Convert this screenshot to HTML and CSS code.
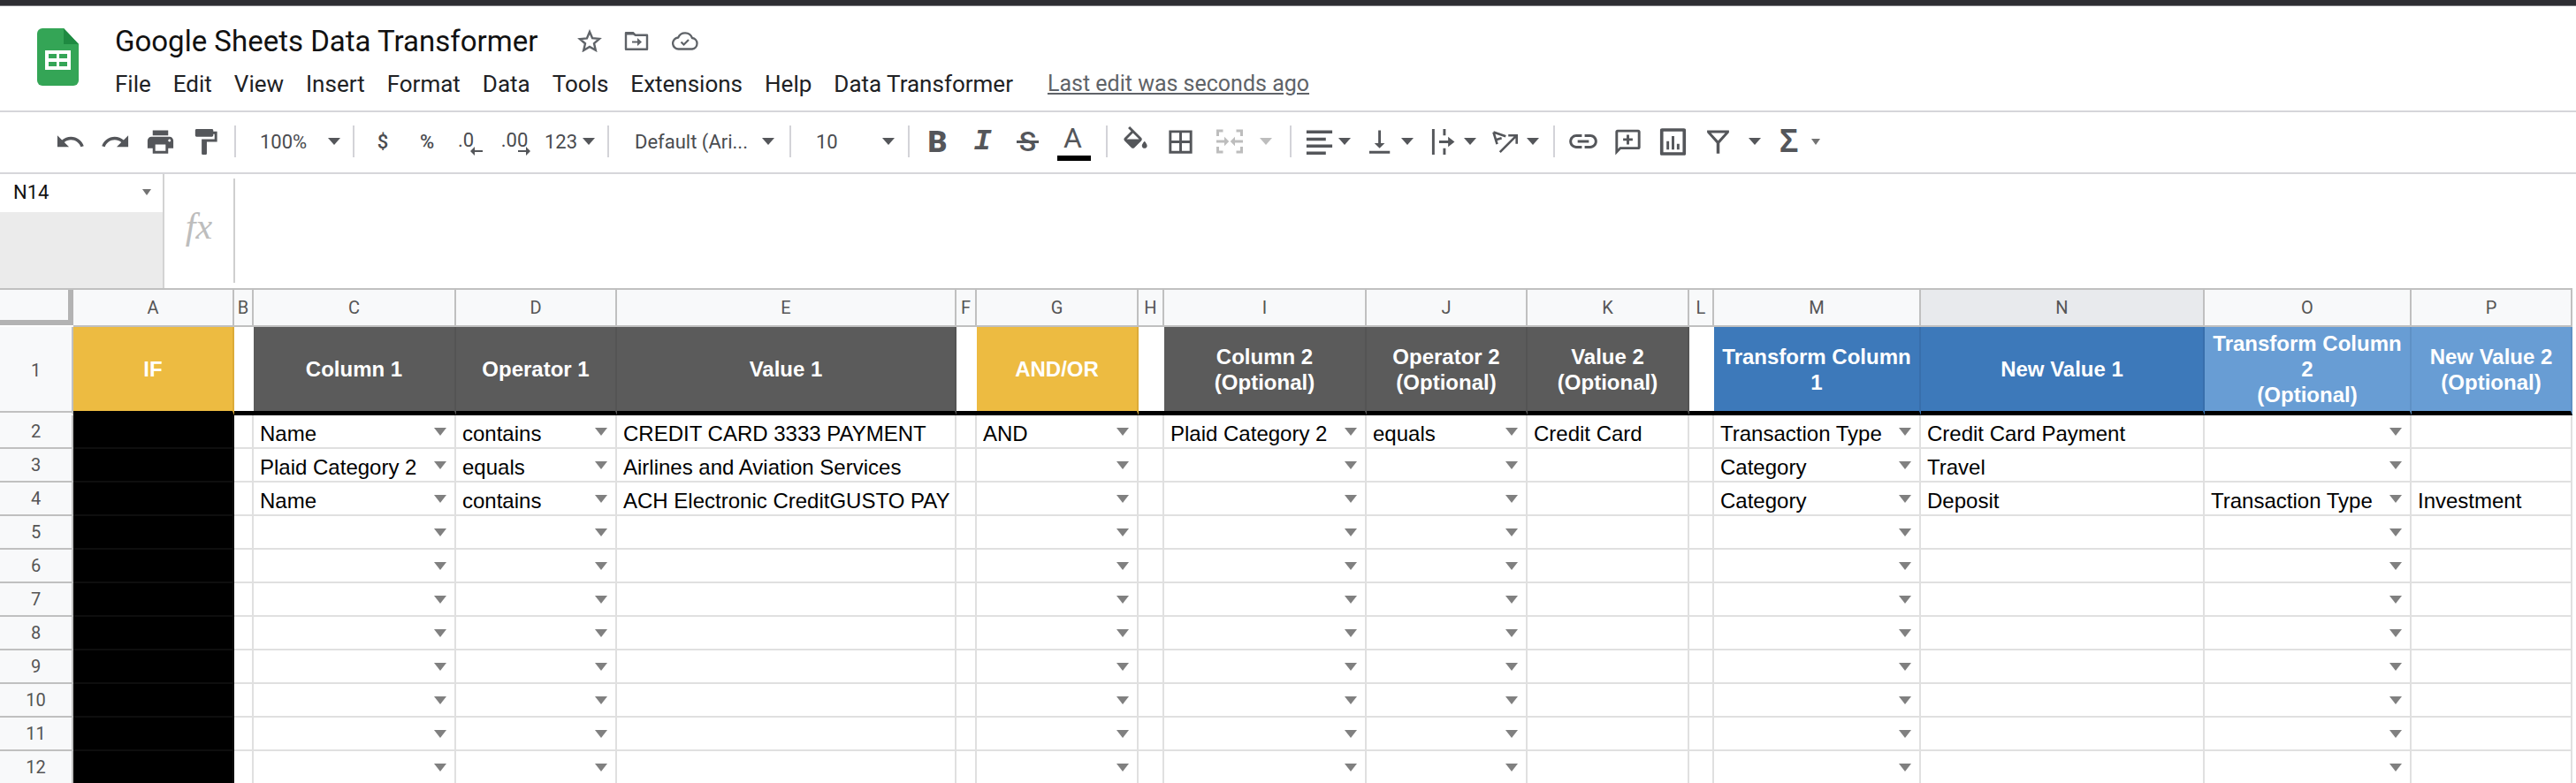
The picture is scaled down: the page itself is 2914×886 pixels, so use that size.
FILE: index.html
```html
<!DOCTYPE html>
<html>
<head>
    <title>Google Sheets Data Transformer</title>
    <link rel="stylesheet" href="styles.css">
</head>
<body>
    <div class="topbar"></div>
    <header class="docbar">
        <svg class="logo" viewBox="0 0 47 65">
            <path fill="#34a556" d="M6 0H30L47 18V59a6 6 0 0 1-6 6H6a6 6 0 0 1-6-6V6a6 6 0 0 1 6-6z"/>
            <path fill="#1e8a41" d="M30 0L47 18H30z"/>
            <path fill="#fff" d="M9 25H38V47H9z"/>
            <path fill="#34a556" d="M13 29H22V34H13zM25 29H34V34H25zM13 38H22V43H13zM25 38H34V43H25z"/>
        </svg>
        <div class="docinfo">
            <div class="titlerow">
                <span class="title">Google Sheets Data Transformer</span>
                <svg class="ticon star" viewBox="0 0 28 26"><path fill="none" stroke="#5f6368" stroke-width="2.4" d="M14 3l3.1 7.2 7.9.7-6 5.2 1.8 7.7L14 20l-6.800 4 1.800-7.700-6-5.200 7.900-.700z"/></svg>
                <svg class="ticon folder" viewBox="0 0 28 24"><path fill="none" stroke="#5f6368" stroke-width="2.4" d="M2 3.200h8l2.500 2.500H26v16H2z" stroke-linejoin="round"/><path fill="#5f6368" d="M2 2h8l3 3.500H2zM9 12.500h6V9l5 4.500-5 4.500v-3.500H9z"/></svg>
                <svg class="ticon cloud" viewBox="0 0 30 22"><path fill="none" stroke="#5f6368" stroke-width="2.300" d="M8 20.500a6.500 6.500 0 0 1-.8-13A8.500 8.500 0 0 1 23 8a6.300 6.300 0 0 1 0 12.500z"/><path fill="none" stroke="#5f6368" stroke-width="2.200" d="M10.500 12.500l3 3 5.500-5.500"/></svg>
            </div>
            <nav class="menu">
                <span>File</span>
                <span>Edit</span>
                <span>View</span>
                <span>Insert</span>
                <span>Format</span>
                <span>Data</span>
                <span>Tools</span>
                <span>Extensions</span>
                <span>Help</span>
                <span>Data Transformer</span>
                <span class="lastedit">Last edit was seconds ago</span>
            </nav>
        </div>
    </header>

    <div class="toolbar">
        <div class="group g-history">
            <div class="t"><svg class="ic" viewBox="0 0 24 24"><path d="M12.500 8c-2.650 0-5.050.99-6.900 2.600L2 7v9h9l-3.620-3.620c1.390-1.160 3.160-1.880 5.120-1.880 3.540 0 6.550 2.310 7.600 5.500l2.370-.78C21.080 11.030 17.150 8 12.500 8z"/></svg></div>
            <div class="t"><svg class="ic" viewBox="0 0 24 24"><path d="M18.400 10.600C16.550 8.990 14.150 8 11.500 8c-4.650 0-8.580 3.030-9.960 7.220L3.900 16c1.050-3.190 4.050-5.500 7.600-5.500 1.950 0 3.730.72 5.120 1.880L13 16h9V7l-3.600 3.600z"/></svg></div>
            <div class="t"><svg class="ic" viewBox="0 0 24 24"><path d="M19 8H5c-1.660 0-3 1.340-3 3v6h4v4h12v-4h4v-6c0-1.660-1.340-3-3-3zm-3 11H8v-5h8v5zm3-7c-.55 0-1-.45-1-1s.45-1 1-1 1 .45 1 1-.45 1-1 1zm-1-9H6v4h12V3z"/></svg></div>
            <div class="t"><svg class="ic" viewBox="0 0 24 24"><path d="M18 4V3c0-.55-.45-1-1-1H5c-.55 0-1 .45-1 1v4c0 .55.45 1 1 1h12c.55 0 1-.45 1-1V6h1v4H9v11c0 .55.45 1 1 1h2c.55 0 1-.45 1-1v-9h8V4h-3z"/></svg></div>
        </div>
        <div class="group combo g-zoom"><span>100%</span><i class="tri"></i></div>
        <div class="group g-number">
            <div class="t txt w50">$</div>
            <div class="t txt w50">%</div>
            <div class="t txt w44 dec dec-less">.0<svg class="decarrow" viewBox="0 0 14 10"><path d="M5 0v4h9v2H5v4L0 5z"/></svg></div>
            <div class="t txt w60 dec dec-more">.00<svg class="decarrow" viewBox="0 0 14 10"><path d="M9 0v4H0v2h9v4l5-5z"/></svg></div>
            <div class="t txt w60 more">123<i class="tri"></i></div>
        </div>
        <div class="group combo g-font"><span>Default (Ari...</span><i class="tri"></i></div>
        <div class="group combo g-size"><span>10</span><i class="tri"></i></div>
        <div class="group g-format">
            <div class="t letter bold">B</div>
            <div class="t letter ital">I</div>
            <div class="t letter strike">S</div>
            <div class="t letter color">A</div>
        </div>
        <div class="group g-cell">
            <div class="t"><svg class="ic" viewBox="0 0 24 24"><path d="M16.560 8.940L7.620 0 6.210 1.410l2.380 2.380-5.150 5.150c-.59.59-.59 1.540 0 2.120l5.500 5.500c.29.29.68.44 1.060.44s.77-.15 1.060-.44l5.500-5.500c.59-.58.59-1.530 0-2.120zM5.210 10L10 5.210 14.790 10H5.210zM19 11.500s-2 2.170-2 3.500c0 1.100.9 2 2 2s2-.9 2-2c0-1.330-2-3.500-2-3.500z"/></svg></div>
            <div class="t"><svg class="ic" viewBox="0 0 24 24"><path d="M3 3v18h18V3H3zm8 16H5v-6h6v6zm0-8H5V5h6v6zm8 8h-6v-6h6v6zm0-8h-6V5h6v6z"/></svg></div>
            <div class="t w60"><svg class="ic off" viewBox="0 0 24 24"><path d="M2 3h5v2H4v3H2zM17 3h5v5h-2V5h-3zM2 16h2v3h3v2H2zM20 16h2v5h-5v-2h3zM2 11h6V8.500l3.500 3.500L8 15.500V13H2zM22 11h-6V8.500L12.500 12l3.500 3.500V13h6z"/></svg></div>
            <i class="tri off"></i>
        </div>
        <div class="group g-align">
            <div class="t dd"><svg class="ic" viewBox="0 0 24 24"><path d="M2 3h20v2.500H2zM2 8.700h15v2.500H2zM2 14h20v2.500H2zM2 19.500h15V22H2z"/></svg><i class="tri"></i></div>
            <div class="t dd"><svg class="ic" viewBox="2 0 24 24"><path d="M16 13h-3V3h-2v10H8l4 4 4-4zM4 19v2h16v-2H4z"/></svg><i class="tri"></i></div>
            <div class="t dd"><svg class="ic" viewBox="0 0 24 24"><path d="M2 2h2v20H2zM10.600 2h2v5h-2zM10.600 17h2v5h-2zM7.500 11h7V8l5 4-5 4v-3h-7z"/></svg><i class="tri"></i></div>
            <div class="t dd"><svg class="ic" viewBox="4 0 24 24"><path fill="none" stroke="#54565a" stroke-width="1.800" d="M5 4.500l9.500 3.200M5 4.500l2.800 9.300M6.300 10.700l5-1.600M10 20L22.500 7.500M16.500 7h6.500v6.500"/></svg><i class="tri"></i></div>
        </div>
        <div class="group g-insert">
            <div class="t"><svg class="ic link" viewBox="0 0 24 24"><path d="M3.900 12c0-1.710 1.390-3.100 3.100-3.100h4V7H7c-2.760 0-5 2.240-5 5s2.240 5 5 5h4v-1.900H7c-1.710 0-3.100-1.390-3.100-3.100zM8 13h8v-2H8v2zm9-6h-4v1.900h4c1.710 0 3.100 1.390 3.100 3.100s-1.390 3.100-3.100 3.100h-4V17h4c2.760 0 5-2.240 5-5s-2.240-5-5-5z"/></svg></div>
            <div class="t"><svg class="ic" viewBox="0 0 24 24"><path d="M4 2.500h16c1 0 1.700.7 1.700 1.700v12c0 1-.7 1.700-1.700 1.700H6.500l-4.200 4.300V4.200c0-1 .7-1.700 1.700-1.700zm.3 2v13l1.400-1.500h14V4.500zM11 6.500h2V9.200h2.700v2H13V14h-2v-2.800H8.300v-2H11z"/></svg></div>
            <div class="t"><svg class="ic" viewBox="0 0 24 24"><path d="M3.500 1.500h17c1 0 1.500.6 1.500 1.500v18c0 1-.5 1.500-1.500 1.500h-17C2.500 22.500 2 22 2 21V3c0-.9.500-1.500 1.500-1.500zM4.500 4v16h15V4zM7 11.500h2V18H7zM11 7.500h2V18h-2zM15 13.500h2V18h-2z"/></svg></div>
            <div class="t filter"><svg class="ic" viewBox="0 0 24 24"><path d="M3.500 3h17v1.800L13.200 13v8h-2.400v-8L3.500 4.800zm3 2.200L12 11.200l5.500-6z"/></svg></div>
            <i class="tri filter-tri"></i>
            <div class="t letter sigma">Σ</div>
            <i class="tri small"></i>
        </div>
    </div>

    <div class="formulabar">
        <div class="namebox">
            <div class="namecell"><span>N14</span><i class="tri small"></i></div>
        </div>
        <div class="fx">fx</div>
        <div class="input"></div>
    </div>

    <div class="sheet">
        <div class="corner"></div>
        <div class="ch">A</div><div class="ch">B</div><div class="ch">C</div><div class="ch">D</div><div class="ch">E</div><div class="ch">F</div><div class="ch">G</div><div class="ch">H</div><div class="ch">I</div><div class="ch">J</div><div class="ch">K</div><div class="ch">L</div><div class="ch">M</div><div class="ch active">N</div><div class="ch">O</div><div class="ch">P</div>

        <div class="rh first">1</div>
        <div class="hd yellow">IF</div>
        <div class="hd"></div>
        <div class="hd gray">Column 1</div>
        <div class="hd gray">Operator 1</div>
        <div class="hd gray">Value 1</div>
        <div class="hd"></div>
        <div class="hd yellow">AND/OR</div>
        <div class="hd"></div>
        <div class="hd gray">Column 2<br>(Optional)</div>
        <div class="hd gray">Operator 2<br>(Optional)</div>
        <div class="hd gray">Value 2<br>(Optional)</div>
        <div class="hd"></div>
        <div class="hd blue">Transform Column 1</div>
        <div class="hd blue">New Value 1</div>
        <div class="hd lightblue">Transform Column 2<br>(Optional)</div>
        <div class="hd lightblue">New Value 2<br>(Optional)</div>

        <div class="rh">2</div><div class="c blk"></div><div class="c"></div><div class="c dd"><span>Name</span></div><div class="c dd"><span>contains</span></div><div class="c"><span>CREDIT CARD 3333 PAYMENT</span></div><div class="c"></div><div class="c dd"><span>AND</span></div><div class="c"></div><div class="c dd"><span>Plaid Category 2</span></div><div class="c dd"><span>equals</span></div><div class="c"><span>Credit Card</span></div><div class="c"></div><div class="c dd"><span>Transaction Type</span></div><div class="c"><span>Credit Card Payment</span></div><div class="c dd"></div><div class="c"></div>
        <div class="rh">3</div><div class="c blk"></div><div class="c"></div><div class="c dd"><span>Plaid Category 2</span></div><div class="c dd"><span>equals</span></div><div class="c"><span>Airlines and Aviation Services</span></div><div class="c"></div><div class="c dd"></div><div class="c"></div><div class="c dd"></div><div class="c dd"></div><div class="c"></div><div class="c"></div><div class="c dd"><span>Category</span></div><div class="c"><span>Travel</span></div><div class="c dd"></div><div class="c"></div>
        <div class="rh">4</div><div class="c blk"></div><div class="c"></div><div class="c dd"><span>Name</span></div><div class="c dd"><span>contains</span></div><div class="c"><span>ACH Electronic CreditGUSTO PAY</span></div><div class="c"></div><div class="c dd"></div><div class="c"></div><div class="c dd"></div><div class="c dd"></div><div class="c"></div><div class="c"></div><div class="c dd"><span>Category</span></div><div class="c"><span>Deposit</span></div><div class="c dd"><span>Transaction Type</span></div><div class="c"><span>Investment</span></div>
        <div class="rh">5</div><div class="c blk"></div><div class="c"></div><div class="c dd"></div><div class="c dd"></div><div class="c"></div><div class="c"></div><div class="c dd"></div><div class="c"></div><div class="c dd"></div><div class="c dd"></div><div class="c"></div><div class="c"></div><div class="c dd"></div><div class="c"></div><div class="c dd"></div><div class="c"></div>
        <div class="rh">6</div><div class="c blk"></div><div class="c"></div><div class="c dd"></div><div class="c dd"></div><div class="c"></div><div class="c"></div><div class="c dd"></div><div class="c"></div><div class="c dd"></div><div class="c dd"></div><div class="c"></div><div class="c"></div><div class="c dd"></div><div class="c"></div><div class="c dd"></div><div class="c"></div>
        <div class="rh">7</div><div class="c blk"></div><div class="c"></div><div class="c dd"></div><div class="c dd"></div><div class="c"></div><div class="c"></div><div class="c dd"></div><div class="c"></div><div class="c dd"></div><div class="c dd"></div><div class="c"></div><div class="c"></div><div class="c dd"></div><div class="c"></div><div class="c dd"></div><div class="c"></div>
        <div class="rh">8</div><div class="c blk"></div><div class="c"></div><div class="c dd"></div><div class="c dd"></div><div class="c"></div><div class="c"></div><div class="c dd"></div><div class="c"></div><div class="c dd"></div><div class="c dd"></div><div class="c"></div><div class="c"></div><div class="c dd"></div><div class="c"></div><div class="c dd"></div><div class="c"></div>
        <div class="rh">9</div><div class="c blk"></div><div class="c"></div><div class="c dd"></div><div class="c dd"></div><div class="c"></div><div class="c"></div><div class="c dd"></div><div class="c"></div><div class="c dd"></div><div class="c dd"></div><div class="c"></div><div class="c"></div><div class="c dd"></div><div class="c"></div><div class="c dd"></div><div class="c"></div>
        <div class="rh">10</div><div class="c blk"></div><div class="c"></div><div class="c dd"></div><div class="c dd"></div><div class="c"></div><div class="c"></div><div class="c dd"></div><div class="c"></div><div class="c dd"></div><div class="c dd"></div><div class="c"></div><div class="c"></div><div class="c dd"></div><div class="c"></div><div class="c dd"></div><div class="c"></div>
        <div class="rh">11</div><div class="c blk"></div><div class="c"></div><div class="c dd"></div><div class="c dd"></div><div class="c"></div><div class="c"></div><div class="c dd"></div><div class="c"></div><div class="c dd"></div><div class="c dd"></div><div class="c"></div><div class="c"></div><div class="c dd"></div><div class="c"></div><div class="c dd"></div><div class="c"></div>
        <div class="rh">12</div><div class="c blk"></div><div class="c"></div><div class="c dd"></div><div class="c dd"></div><div class="c"></div><div class="c"></div><div class="c dd"></div><div class="c"></div><div class="c dd"></div><div class="c dd"></div><div class="c"></div><div class="c"></div><div class="c dd"></div><div class="c"></div><div class="c dd"></div><div class="c"></div>
    </div>
</body>
</html>
```

FILE: styles.css
```css
html, body {
    margin: 0;
    height: 886px;
    overflow: hidden;
    background: #fff;
    font-family: Roboto, "Liberation Sans", sans-serif;
}

/* top */
.topbar {
    height: 6px;
    background: #2e2e33;
    border-bottom: 1px solid #77777c;
}
.docbar {
    display: flex;
    height: 120px;
    box-sizing: border-box;
    padding: 25px 0 0 42px;
    border-bottom: 2px solid #d6d6da;
}
.logo {
    width: 47px;
    height: 65px;
}
.docinfo {
    margin-left: 41px;
    margin-top: -6px;
}
.titlerow {
    display: flex;
    align-items: center;
    height: 40px;
}
.title {
    width: 523px;
    font-size: 33px;
    color: #111;
}
.ticon {
    height: 26px;
}
.star { width: 28px; }
.folder { width: 28px; margin-left: 25px; }
.cloud { width: 30px; margin-left: 26px; }
.menu {
    display: flex;
    gap: 25px;
    margin-top: 12px;
    font-size: 26px;
    line-height: 34px;
    color: #202124;
}
.lastedit {
    margin-left: 14px;
    font-size: 25px;
    color: #5f6368;
    text-decoration: underline;
}

/* toolbar */
.toolbar {
    display: flex;
    height: 70px;
    box-sizing: border-box;
    border-bottom: 2px solid #d6d6da;
    font-size: 22px;
    color: #4a4c50;
}
.group {
    display: flex;
    align-items: center;
    box-sizing: content-box;
    height: 36px;
    margin-top: 15px;
    border-right: 2px solid #d3d3d8;
}
.t {
    display: flex;
    flex: none;
    align-items: center;
    justify-content: center;
    width: 51px;
    height: 36px;
}
.ic {
    flex: none;
    width: 35px;
    height: 35px;
    fill: #54565a;
}
.ic.off { fill: #bdbdbd; width: 36px; height: 36px; }
.ic.link { width: 38px; height: 38px; }
.tri {
    display: block;
    flex: none;
    width: 0;
    height: 0;
    border-left: 7px solid transparent;
    border-right: 7px solid transparent;
    border-top: 8px solid #54565a;
}
.tri.off { border-top-color: #bdbdbd; margin-left: 4px; }
.tri.small {
    border-left-width: 5px;
    border-right-width: 5px;
    border-top-width: 7px;
    border-top-color: #737373;
}
.combo { justify-content: space-between; }
.g-history { width: 211px; padding-left: 54px; }
.g-zoom { width: 91px; padding: 0 14px 0 27px; }
.g-number { width: 279px; padding-left: 7px; }
.g-font { width: 158px; padding: 0 17px 0 29px; }
.g-size { width: 89px; padding: 0 15px 0 28px; }
.g-format { width: 216px; padding-left: 6px; }
.g-cell { width: 200px; padding-left: 6px; }
.g-align { width: 282px; padding-left: 14px; }
.g-insert { padding-left: 6px; border-right: 0; }
.w44 { width: 44px; }
.w50 { width: 50px; }
.w60 { width: 60px; }
.txt { font-weight: 500; }
.more { width: 68px; gap: 6px; justify-content: flex-start; padding-left: 4px; box-sizing: border-box; font-weight: 400; }
.dec {
    position: relative;
    box-sizing: border-box;
    padding-bottom: 4px;
    font-weight: 400;
}
.decarrow {
    position: absolute;
    bottom: 2px;
    width: 14px;
    height: 10px;
    fill: #54565a;
}
.dec-less { padding-right: 6px; }
.dec-less .decarrow { right: 6px; }
.dec-more .decarrow { right: 12px; }
.dd.t {
    width: 71px;
    justify-content: flex-start;
    gap: 0;
}
.dd .ic { width: 35px; height: 35px; margin-right: 4px; }
.letter { font-size: 32px; color: #54565a; }
.bold { font-size: 34px; font-weight: 900; }
.ital { font-family: "Liberation Mono", monospace; font-size: 34px; font-style: italic; font-weight: 700; }
.strike { position: relative; font-weight: 500; }
.strike::after {
    content: "";
    position: absolute;
    left: 13px;
    right: 13px;
    top: 17px;
    height: 3px;
    background: #54565a;
}
.color {
    position: relative;
    box-sizing: border-box;
    padding-bottom: 8px;
    font-weight: 400;
}
.color::after {
    content: "";
    position: absolute;
    left: 8px;
    right: 5px;
    bottom: -4px;
    height: 6px;
    background: #000;
}
.filter-tri { margin-left: 9px; }
.sigma { margin-left: 6px; font-family: "Liberation Sans", sans-serif; font-size: 36px; font-weight: 700; }

/* formula bar */
.formulabar {
    display: flex;
    height: 129px;
}
.namebox {
    width: 184px;
    background: #ebebeb;
    border-right: 2px solid #d3d3d3;
}
.namecell {
    display: flex;
    align-items: center;
    justify-content: space-between;
    box-sizing: border-box;
    height: 43px;
    padding: 0 13px 2px 15px;
    background: #fff;
    font-size: 22px;
    color: #111;
}
.fx {
    width: 78px;
    height: 118px;
    margin-top: 5px;
    border-right: 2px solid #cfcfcf;
    box-sizing: content-box;
    font-family: "Liberation Serif", serif;
    font-style: italic;
    font-size: 42px;
    line-height: 108px;
    text-align: center;
    color: #bdbdbd;
}

/* grid */
.sheet {
    display: grid;
    grid-template-columns: 83px 182px 22px 229px 182px 384px 23px 183px 29px 229px 182px 183px 28px 234px 321px 234px 182px;
    grid-template-rows: 42px 100px;
    grid-auto-rows: 38px;
    width: 2910px;
    border-top: 2px solid #c0c0c0;
}
.corner, .ch, .rh {
    display: flex;
    align-items: center;
    justify-content: center;
    box-sizing: border-box;
    background: #f8f9fa;
    border-right: 2px solid #c0c0c0;
    border-bottom: 2px solid #c0c0c0;
    font-size: 20px;
    color: #555;
}
.corner {
    border-right: 6px solid #b3b3b3;
    border-bottom: 6px solid #b3b3b3;
    box-shadow: 2px 0 #f8f9fa;
    margin-bottom: 2px;
}
.ch.active { background: #e8eaed; }
.rh.first {
    border-bottom: 3px solid #f8f9fa;
    box-shadow: inset 0 -2px #c0c0c0;
}
.hd {
    display: flex;
    align-items: center;
    justify-content: center;
    box-sizing: border-box;
    padding: 0 7px;
    border-bottom: 5px solid #000;
    font-size: 24px;
    font-family: "Liberation Sans", sans-serif;
    font-weight: 700;
    line-height: 29px;
    text-align: center;
    color: #fff;
}
.hd.gray { background: #5b5b5b; border-right: 2px solid #545454; }
.hd.yellow { background: #edbb41; border-right: 2px solid #dcab38; }
.hd.blue { background: #3d79ba; border-right: 2px solid #386fac; }
.hd.lightblue { background: #689dd4; border-right: 2px solid #5f91c5; }
.c {
    display: flex;
    align-items: center;
    justify-content: space-between;
    box-sizing: border-box;
    min-width: 0;
    padding: 0 9px 0 7px;
    border-right: 2px solid #e0e0e0;
    border-bottom: 2px solid #e0e0e0;
    font-family: "Liberation Sans", sans-serif;
    font-size: 24px;
    color: #000;
    white-space: nowrap;
}
.c span { padding-top: 5px; }
.c.blk { background: #000; border-color: #0e0e0e; }
.c.dd::after {
    content: "";
    margin-left: auto;
    flex: none;
    width: 0;
    height: 0;
    border-left: 7px solid transparent;
    border-right: 7px solid transparent;
    border-top: 9px solid #808080;
}
```
